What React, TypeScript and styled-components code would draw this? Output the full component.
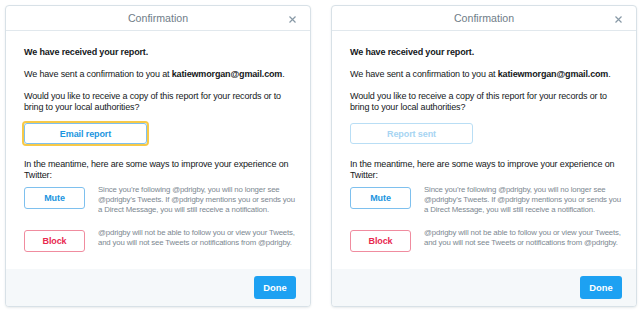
import React from 'react'
import styled, { createGlobalStyle } from 'styled-components'

const GlobalStyle = createGlobalStyle`
  html, body {
    margin: 0;
    padding: 0;
    background: #fff;
  }
  body {
    font-family: 'Liberation Sans', Arial, sans-serif;
    color: #14171a;
  }
`

const Page = styled.div`
  display: flex;
  gap: 20px;
  padding: 5px 6px 0 5px;
  width: 644px;
  height: 314px;
  box-sizing: border-box;
`

const Dialog = styled.div`
  width: 306px;
  height: 302px;
  box-sizing: border-box;
  border: 1px solid #d8e1e7;
  border-radius: 4px;
  box-shadow: 0 1px 2px rgba(101, 119, 134, 0.15);
  display: flex;
  flex-direction: column;
  overflow: hidden;
  background: #fff;
`

const Header = styled.div`
  position: relative;
  height: 25px;
  flex: none;
  box-sizing: border-box;
  border-bottom: 1px solid #e1e8ed;
  display: flex;
  align-items: center;
  justify-content: center;
  font-size: 10.6px;
  color: #6f7d88;
`

const Close = styled.button`
  position: absolute;
  right: 13px;
  top: 8px;
  width: 10px;
  height: 10px;
  padding: 0;
  border: 0;
  background: none;
  display: flex;
  align-items: center;
  justify-content: center;
`

const Body = styled.div`
  flex: 1;
  min-height: 0;
  padding: 16px 12px 0 18px;
  font-size: 9px;
  letter-spacing: -0.15px;
  line-height: 10.7px;
`

const Para = styled.p<{ $bold?: boolean; $gap?: number }>`
  margin: 0 0 ${(p) => p.$gap ?? 11.5}px;
  font-weight: ${(p) => (p.$bold ? 700 : 400)};
`

const Focus = styled.div<{ $focused?: boolean }>`
  display: flex;
  width: fit-content;
  margin: 0 0 13px -2px;
  border-radius: 4px;
  border: 2px solid ${(p) => (p.$focused ? '#f7c948' : 'transparent')};
`

const OutlineButton = styled.button<{ $tone: 'blue' | 'faded' | 'red'; $w: number; $h: number }>`
  width: ${(p) => p.$w}px;
  height: ${(p) => p.$h}px;
  box-sizing: border-box;
  border-radius: 3px;
  background: #fff;
  font-family: inherit;
  font-size: 9px;
  letter-spacing: -0.1px;
  font-weight: 700;
  padding: 0;
  flex: none;
  border: 1px solid
    ${(p) => (p.$tone === 'red' ? '#f08c9f' : p.$tone === 'faded' ? '#b9def5' : '#7ec0ee')};
  color: ${(p) => (p.$tone === 'red' ? '#e8294f' : p.$tone === 'faded' ? '#a6d4f2' : '#1b95e0')};
`

const Option = styled.div`
  display: flex;
  gap: 13px;
  margin-bottom: 15px;
`

const OptionText = styled.div`
  font-size: 7.8px;
  letter-spacing: -0.15px;
  line-height: 10px;
  color: #7d8891;
  margin-top: -2px;
`

const Footer = styled.div`
  height: 37px;
  flex: none;
  background: #f5f8fa;
  display: flex;
  align-items: center;
  justify-content: flex-end;
  padding: 0 14px 0 0;
`

const DoneButton = styled.button`
  width: 42px;
  height: 23px;
  border: 0;
  border-radius: 3px;
  background: #1da1f2;
  color: #fff;
  font-family: inherit;
  font-size: 9.4px;
  font-weight: 700;
  padding: 0;
`

const XIcon = () => (
  <svg width="7" height="7" viewBox="0 0 7 7">
    <path d="M0.5 0.5L6.5 6.5M6.5 0.5L0.5 6.5" stroke="#8899a6" strokeWidth="1.2" />
  </svg>
)

const ConfirmationDialog = ({ sent }: { sent: boolean }) => (
  <Dialog>
    <Header>
      Confirmation
      <Close aria-label="Close">
        <XIcon />
      </Close>
    </Header>
    <Body>
      <Para $bold>We have received your report.</Para>
      <Para>
        We have sent a confirmation to you at <b>katiewmorgan@gmail.com</b>.
      </Para>
      <Para $gap={8.5}>
        Would you like to receive a copy of this report for your records or to bring to your local authorities?
      </Para>
      <Focus $focused={!sent}>
        <OutlineButton $tone={sent ? 'faded' : 'blue'} $w={123} $h={21}>
          {sent ? 'Report sent' : 'Email report'}
        </OutlineButton>
      </Focus>
      <Para $gap={6.5}>In the meantime, here are some ways to improve your experience on Twitter:</Para>
      <Option>
        <OutlineButton $tone="blue" $w={61} $h={22}>
          Mute
        </OutlineButton>
        <OptionText>
          Since you’re following @pdrigby, you will no longer see @pdrigby’s Tweets. If @pdrigby mentions you or sends
          you a Direct Message, you will still receive a notification.
        </OptionText>
      </Option>
      <Option>
        <OutlineButton $tone="red" $w={61} $h={22}>
          Block
        </OutlineButton>
        <OptionText>
          @pdrigby will not be able to follow you or view your Tweets, and you will not see Tweets or notifications from
          @pdrigby.
        </OptionText>
      </Option>
    </Body>
    <Footer>
      <DoneButton>Done</DoneButton>
    </Footer>
  </Dialog>
)

export default function App() {
  return (
    <>
      <GlobalStyle />
      <Page>
        <ConfirmationDialog sent={false} />
        <ConfirmationDialog sent />
      </Page>
    </>
  )
}
